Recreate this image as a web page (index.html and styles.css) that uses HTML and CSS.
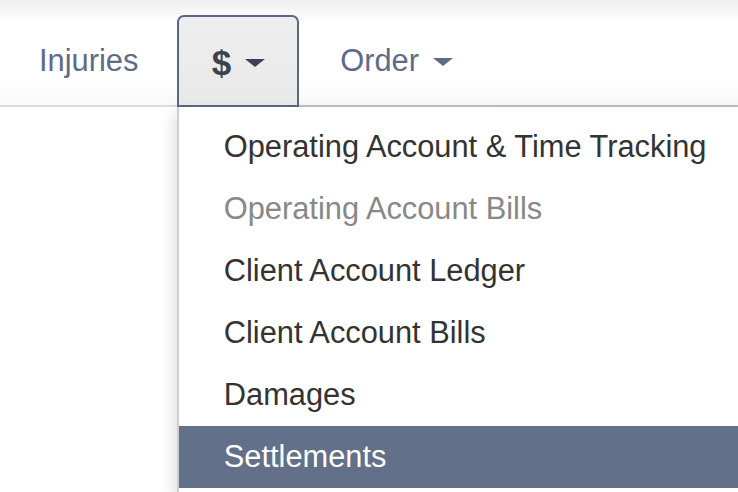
FILE: index.html
```html
<!DOCTYPE html>
<html lang="en">
<head>
    <meta charset="UTF-8">
    <title>Case Menu</title>
    <link rel="stylesheet" href="styles.css">
</head>
<body>
    <nav class="navbar">
        <ul class="nav-tabs">
            <li class="nav-item first">
                <a class="nav-link">Injuries</a>
            </li>
            <li class="nav-item active">
                <a class="nav-link">
                    <span class="dollar">$</span>
                    <span class="caret"></span>
                </a>
                <ul class="dropdown-menu">
                    <li><a>Operating Account &amp; Time Tracking</a></li>
                    <li class="disabled"><a>Operating Account Bills</a></li>
                    <li><a>Client Account Ledger</a></li>
                    <li><a>Client Account Bills</a></li>
                    <li><a>Damages</a></li>
                    <li class="selected"><a>Settlements</a></li>
                </ul>
            </li>
            <li class="nav-item">
                <a class="nav-link">Order <span class="caret"></span></a>
            </li>
            <li class="nav-fill"></li>
        </ul>
    </nav>
</body>
</html>
```

FILE: styles.css
```css
* {
    margin: 0;
    padding: 0;
    box-sizing: border-box;
}

body {
    font-family: "Liberation Sans", Arial, sans-serif;
    font-size: 30.8px;
    background: #fff;
    overflow: hidden;
    height: 492px;
}

.navbar {
    height: 107px;
    background: linear-gradient(#eeeeee 0, #ffffff 22px, #ffffff 80px, #f8f8f8 100%);
}

.nav-tabs {
    list-style: none;
    display: flex;
    align-items: flex-end;
    height: 107px;
}

.nav-item {
    position: relative;
    height: 92px;
    border-bottom: 2px solid #bcbcbc;
}

.nav-item.first {
    border-bottom-color: #dddddd;
}

.nav-fill {
    flex: 1;
    height: 92px;
    border-bottom: 2px solid #bcbcbc;
}

.nav-link {
    display: flex;
    align-items: center;
    height: 90px;
    padding: 3px 40px 0 41px;
    color: #5d6b88;
    line-height: 1;
}

.first .nav-link {
    padding-left: 39px;
    padding-right: 38.5px;
}

.nav-item .caret {
    display: inline-block;
    margin-left: 14px;
    border-top: 8px solid #5d6b88;
    border-left: 10px solid transparent;
    border-right: 10px solid transparent;
}

.nav-item.active {
    border: 2px solid #5a6683;
    border-radius: 7px 7px 0 0;
    background: linear-gradient(#eeeeee, #e9e9e9);
}

.active .nav-link {
    height: 88px;
    padding: 3px 32px 0 33px;
    color: #3b4252;
}

.dollar {
    font-weight: bold;
    font-size: 35px;
}

.active .caret {
    margin-left: 14px;
    border-top-color: #3b4252;
}

.dropdown-menu {
    position: absolute;
    top: 90px;
    left: -2px;
    width: 620px;
    list-style: none;
    padding: 9px 0 8px;
    background: #fff;
    border-left: 2px solid #cfcfcf;
    box-shadow: -4px 6px 14px rgba(0, 0, 0, 0.12);
}

.dropdown-menu a {
    display: block;
    height: 62px;
    line-height: 62px;
    padding: 0 45px;
    color: #333;
    white-space: nowrap;
}

.dropdown-menu .disabled a {
    color: #888;
}

.dropdown-menu .selected a {
    background: #627089;
    color: #fff;
}
```
